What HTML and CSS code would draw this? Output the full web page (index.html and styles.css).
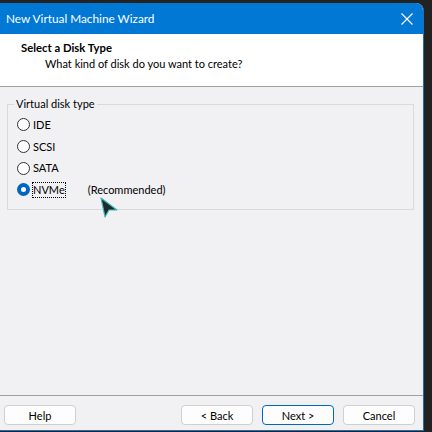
FILE: index.html
```html
<!DOCTYPE html>
<html>
<head>
<meta charset="utf-8">
<link rel="stylesheet" href="styles.css">
</head>
<body>
<div class="window">
  <div class="titlebar">
    <span class="title">New Virtual Machine Wizard</span>
    <svg class="close" width="12" height="12" viewBox="0 0 12 12"><path d="M0.5 0.5 L11.5 11.5 M11.5 0.5 L0.5 11.5" stroke="#fff" stroke-width="1.2" fill="none"/></svg>
  </div>
  <div class="header">
    <div class="h-title">Select a Disk Type</div>
    <div class="h-sub">What kind of disk do you want to create?</div>
  </div>
  <div class="content">
    <fieldset class="group">
      <legend>Virtual disk type</legend>
      <div class="radio"><span class="dot"></span><span class="label">IDE</span></div>
      <div class="radio"><span class="dot"></span><span class="label">SCSI</span></div>
      <div class="radio"><span class="dot"></span><span class="label">SATA</span></div>
      <div class="radio"><span class="dot on"></span><span class="label focus">NVMe</span><span class="rec">(Recommended)</span></div>
    </fieldset>
    <svg class="cursor" width="20" height="22" viewBox="0 0 20 22"><polygon points="1,1 17,13 9,13 5,20" fill="#1e2a2c" stroke="#3fb9b8" stroke-width="1.2" stroke-linejoin="round"/></svg>
  </div>
  <div class="footer">
    <button class="btn">Help</button>
    <div class="spacer"></div>
    <button class="btn">&lt; Back</button>
    <button class="btn default">Next &gt;</button>
    <button class="btn">Cancel</button>
  </div>
</div>
</body>
</html>
```
FILE: styles.css
```css
html, body {
  margin: 0;
  padding: 0;
  background: #222222;
  width: 432px;
  height: 432px;
  overflow: hidden;
  font-family: Lato, "Liberation Sans", sans-serif;
  font-size: 11px;
  color: #000;
}
.window {
  position: relative;
  margin-top: 3px;
  width: 423px;
  height: 427px;
  background: #f1f0f3;
  border-right: 1px solid #1f6fb8;
  border-bottom: 1px solid #1f6fb8;
  border-top-right-radius: 8px;
  overflow: hidden;
  display: flex;
  flex-direction: column;
}
.titlebar {
  height: 31px;
  background: #0078d4;
  color: #fff;
  display: flex;
  align-items: center;
  padding-left: 6px;
  padding-right: 10px;
  flex: none;
}
.title {
  flex: 1;
  font-size: 11.8px;
}
.close { display: block; }
.header {
  height: 53px;
  background: #fff;
  border-bottom: 1px solid #a0a0a0;
  flex: none;
  box-sizing: border-box;
  padding-top: 6px;
}
.h-title {
  font-weight: bold;
  font-size: 11.3px;
  padding-left: 21px;
  line-height: 15px;
}
.h-sub {
  padding-left: 45px;
  line-height: 15px;
  margin-top: 1px;
}
.content {
  flex: 1;
  position: relative;
  padding: 10px 9px 0 7px;
}
.group {
  margin: 0;
  border: 1px solid #dadada;
  padding: 3px 0 6px 9px;
  height: 113px;
  box-sizing: border-box;
}
.group legend {
  padding: 0 2px;
  margin-left: -3px;
  line-height: 14px;
}
.radio {
  display: flex;
  align-items: center;
  height: 21.7px;
}
.dot {
  width: 11px;
  height: 11px;
  border: 1px solid #333;
  border-radius: 50%;
  background: #fff;
  box-sizing: content-box;
  margin-right: 3px;
  flex: none;
}
.dot.on {
  background: #fff;
  border: 4px solid #0067c0;
  width: 5px;
  height: 5px;
}
.label {
  line-height: 14px;
}
.focus {
  outline: 1px dotted #000;
}
.rec {
  margin-left: 23px;
}
.cursor {
  position: absolute;
  left: 100px;
  top: 110px;
}
.footer {
  flex: none;
  height: 35px;
  box-sizing: border-box;
  border-top: 1px solid #a0a0a0;
  display: flex;
  align-items: flex-start;
  padding: 9px 8px 0 4px;
  gap: 9px;
}
.spacer { flex: 1; }
.btn {
  width: 72px;
  height: 20px;
  background: #fdfdfd;
  border: 1px solid #d0d0d0;
  border-radius: 4px;
  font-family: Lato, "Liberation Sans", sans-serif;
  font-size: 11px;
  padding: 0;
  color: #000;
}
.btn.default {
  border: 1px solid #0067c0;
}
```
